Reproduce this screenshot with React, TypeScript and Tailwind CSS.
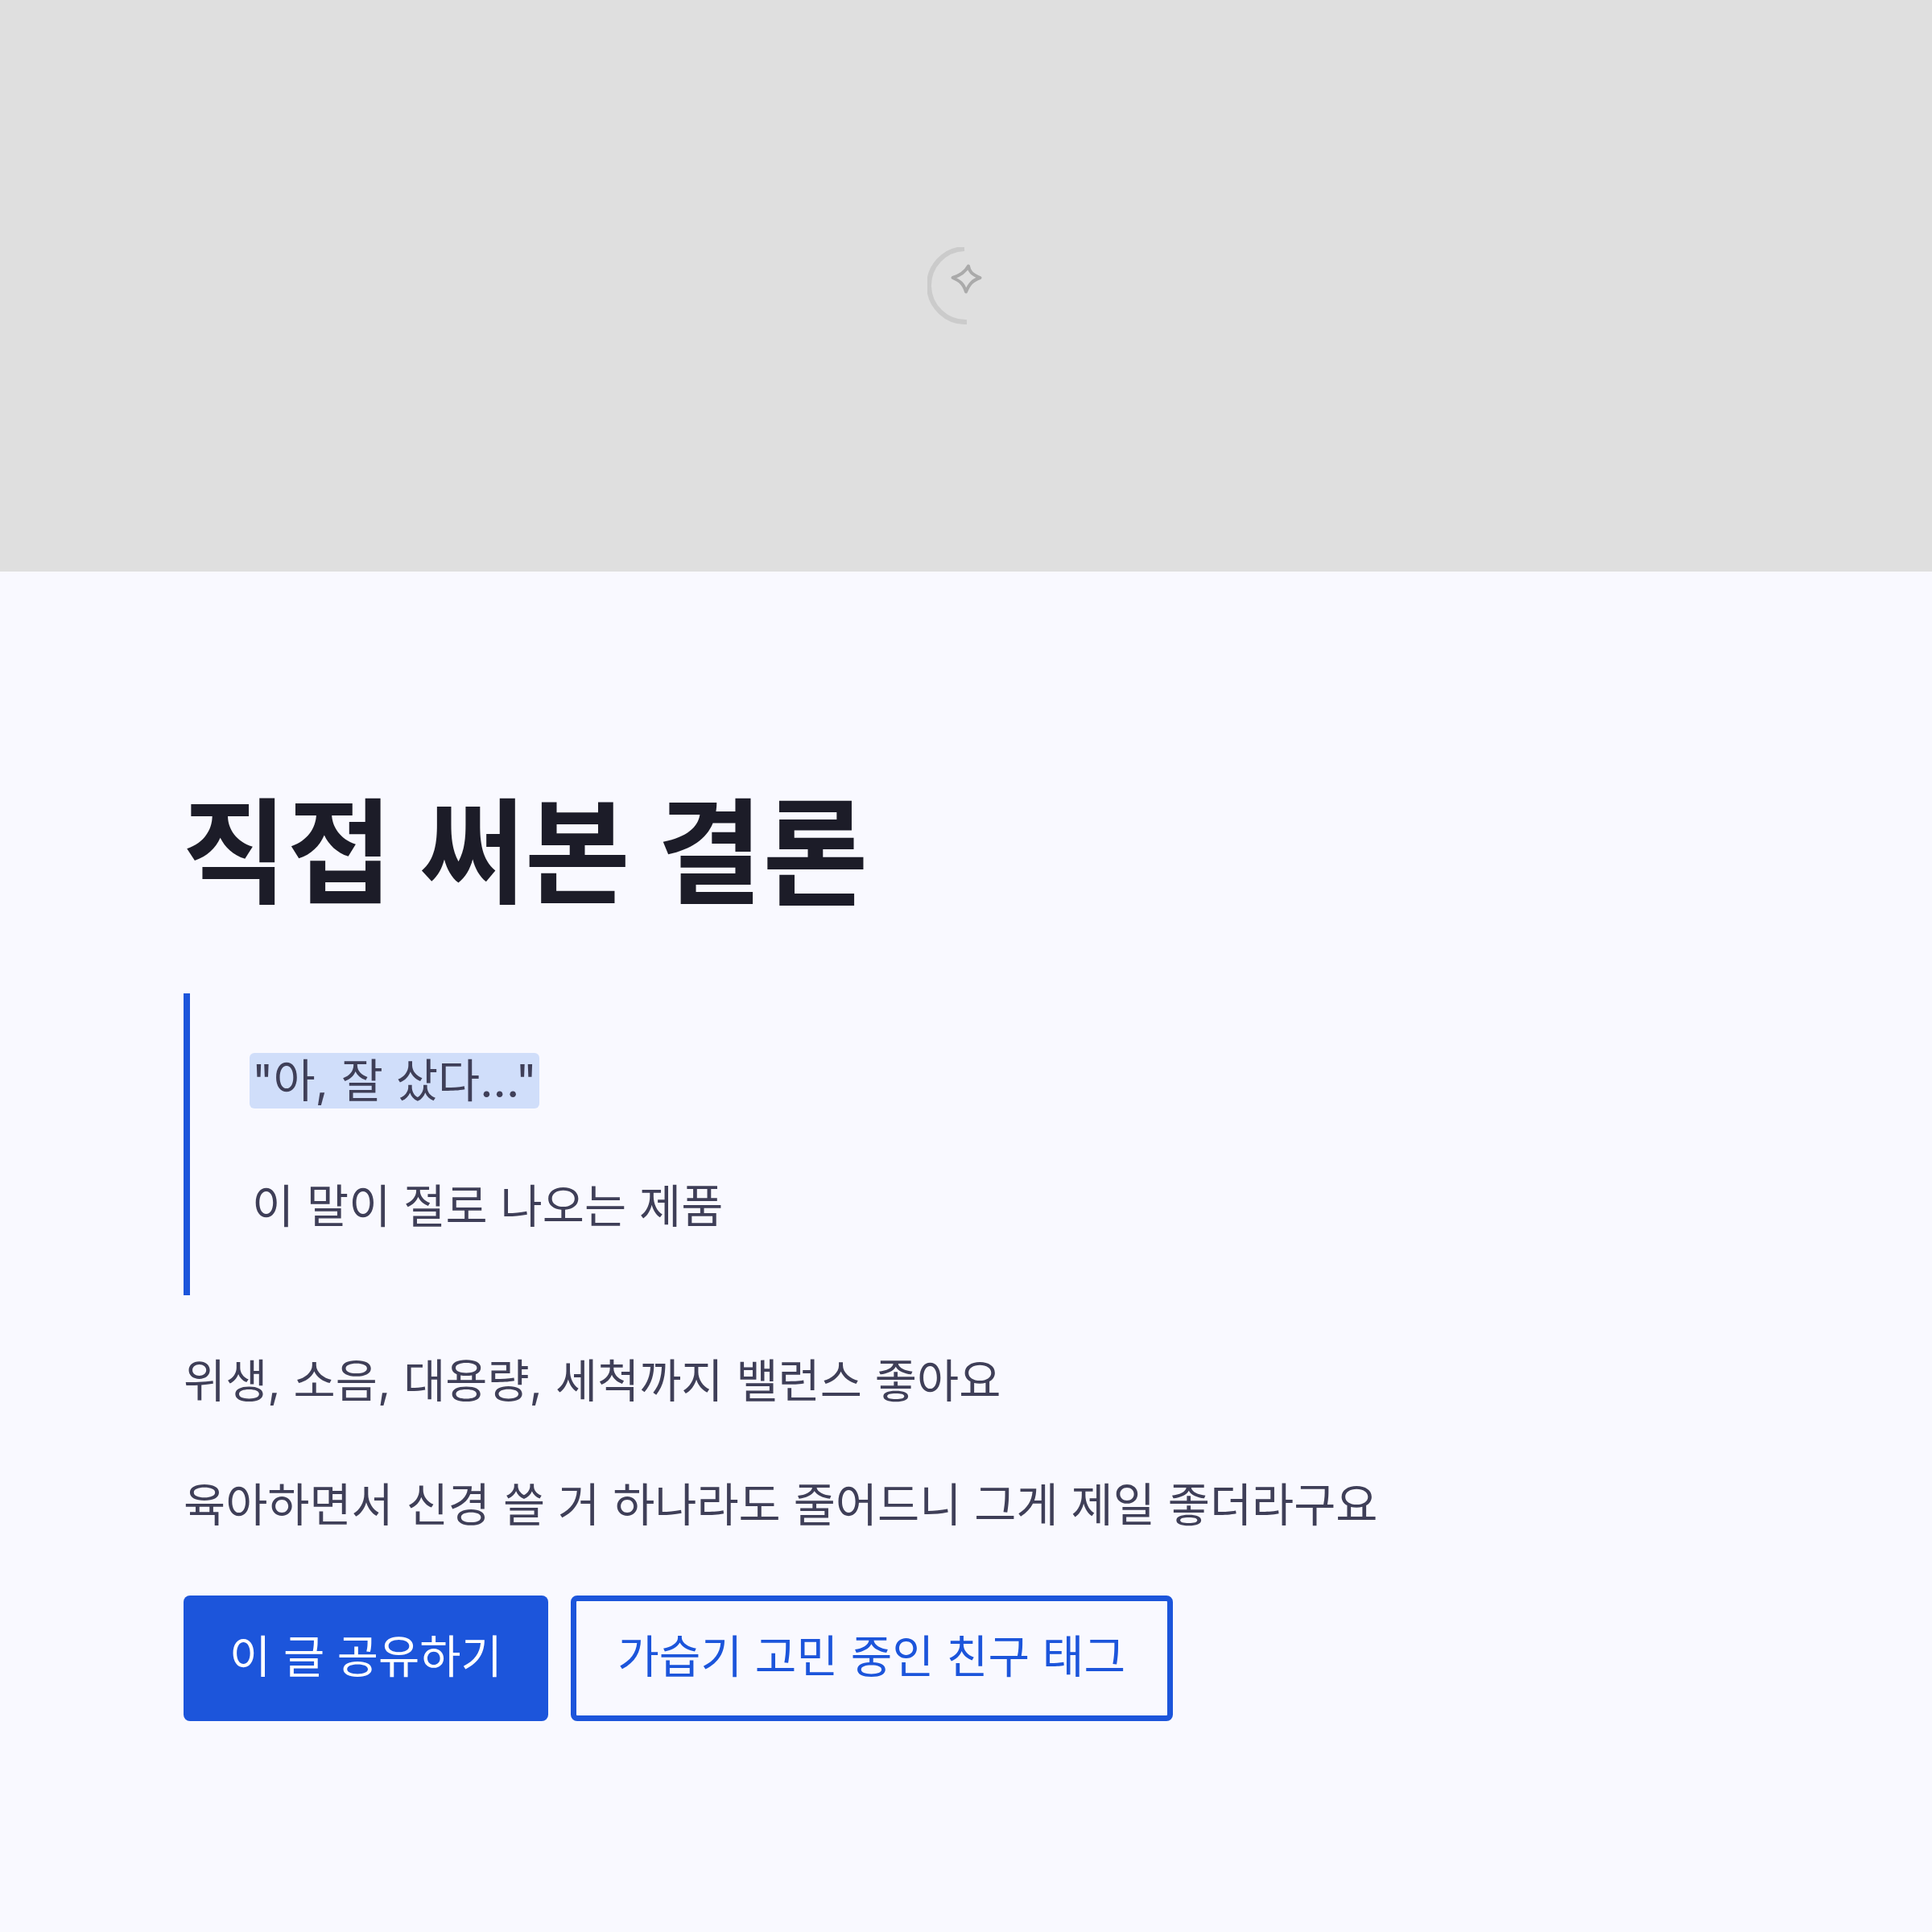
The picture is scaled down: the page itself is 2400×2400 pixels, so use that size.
export default function App() {
  return (
    <div className="min-h-[2400px] bg-[#f9f9ff] font-['Inter','Noto_Sans_CJK_KR',sans-serif]">
      <div className="flex h-[710px] items-center justify-center bg-[#dfdfdf]">
        <svg viewBox="0 0 96 96" className="h-[96px] w-[96px]" fill="none">
          <path d="M46 2 A45.500 45.500 0 0 0 49 93" stroke="#cbcbcb" strokeWidth="6" />
          <path
            d="M51 23.500 C52 30 55 34 65.500 38 C56 41.500 52 45.500 48 55.500 C45 46 41 42 31.500 38 C41 35 47 31 51 23.500 Z"
            stroke="#aaaaaa"
            strokeWidth="4"
            strokeLinejoin="round"
          />
        </svg>
      </div>
      <div className="px-[228px] pt-[257px]">
        <h2 className="-ml-[2px] text-[142.2px] font-bold leading-[185px] text-[#1c1c28]">직접 써본 결론</h2>
        <div className="mt-[82px] border-l-[8px] border-[#1c55db] py-[62px] pl-[72px] text-[56.7px] leading-[96px] text-[#3f3f58]">
          <p className="-mt-[1px] mb-[58.600px] pb-[1px] pl-[2px]">
            <span className="rounded-[6px] bg-[#d0defa] px-[3px]">"아, 잘 샀다..."</span>
          </p>
          <p className="pl-[5px]">이 말이 절로 나오는 제품</p>
        </div>
        <div className="mt-[59px] text-[56.7px] leading-[96px] text-[#3f3f58]">
          <p className="mb-[58.600px]">위생, 소음, 대용량, 세척까지 밸런스 좋아요</p>
          <p>육아하면서 신경 쓸 거 하나라도 줄어드니 그게 제일 좋더라구요</p>
        </div>
        <div className="mt-[64px] flex gap-[28px] leading-[96px]">
          <div className="rounded-[8px] bg-[#1c55db] px-[57px] pb-[32px] pt-[28px] text-[55.7px] text-white">
            이 글 공유하기
          </div>
          <div className="rounded-[8px] border-[7px] border-[#1c55db] px-[51.500px] pb-[25px] pt-[21px] text-[56.1px] text-[#1c55db]">
            가습기 고민 중인 친구 태그
          </div>
        </div>
      </div>
    </div>
  );
}
